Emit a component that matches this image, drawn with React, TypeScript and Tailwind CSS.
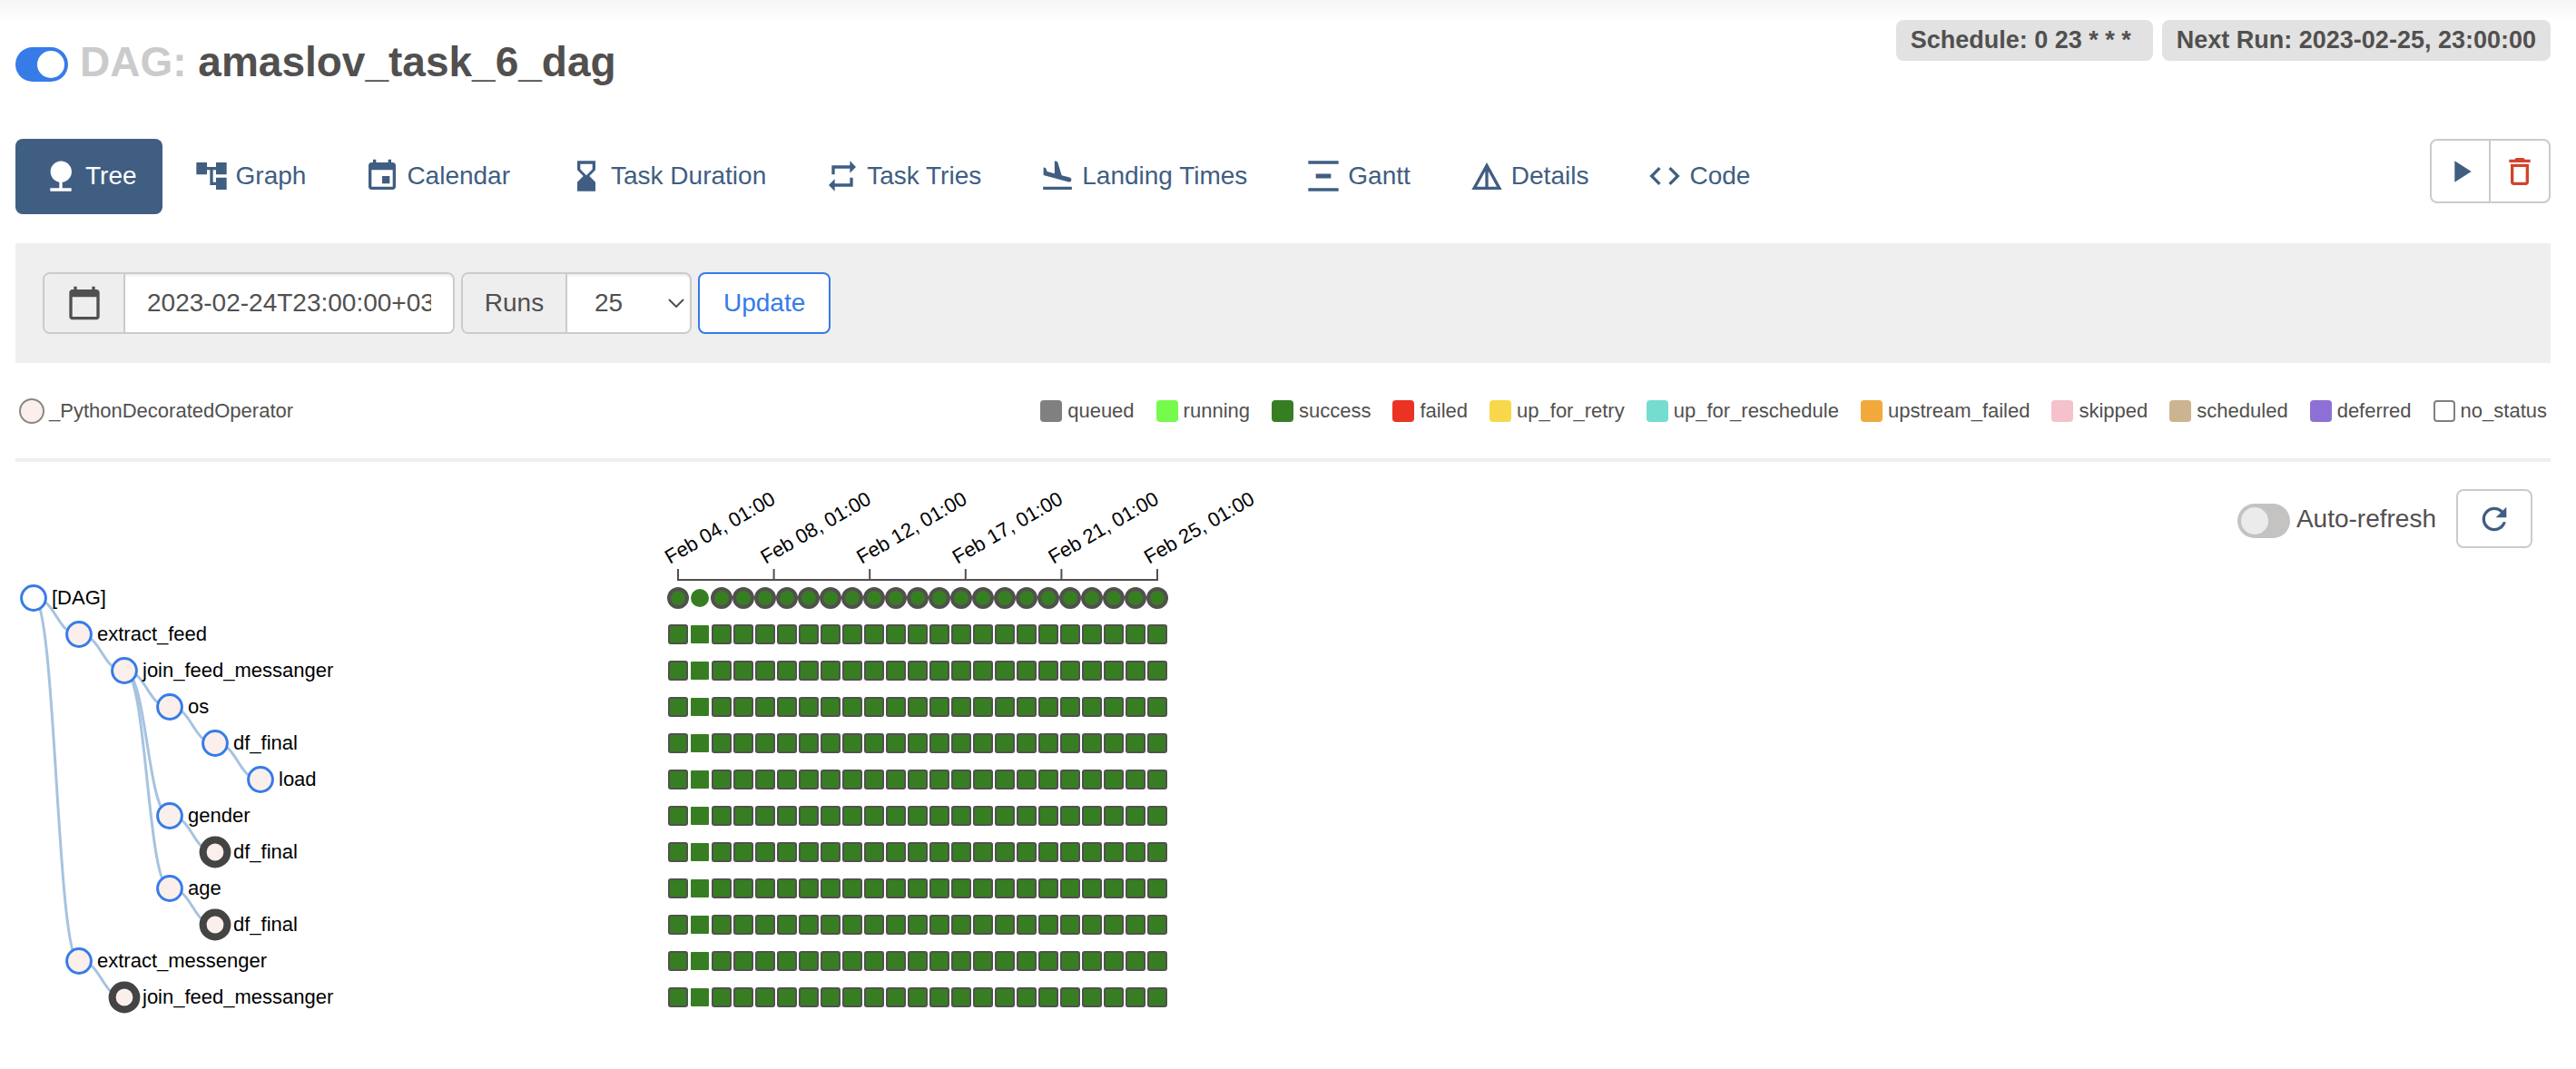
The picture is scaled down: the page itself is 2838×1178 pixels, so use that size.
import React, { useState } from 'react';

const ICONS = {
  tree: 'M13 16.12c3.47-.41 6.17-3.36 6.17-6.95 0-3.87-3.13-7-7-7s-7 3.13-7 7c0 3.47 2.52 6.34 5.83 6.89V20H5v2h14v-2h-6v-3.88z',
  graph: 'M22 11V3h-7v3H9V3H2v8h7V8h2v10h4v3h7v-8h-7v3h-2V8h2v3z',
  event: 'M17 12h-5v5h5v-5zM16 1v2H8V1H6v2H5c-1.11 0-1.99.9-1.99 2L3 19c0 1.1.89 2 2 2h14c1.1 0 2-.9 2-2V5c0-1.1-.9-2-2-2h-1V1h-2zm3 18H5V8h14v11z',
  hourglass: 'M18 22l-.01-6L14 12l3.99-4.01L18 2H6v6l4 4-4 3.99V22h12zM8 7.5V4h8v3.5l-4 4-4-4z',
  repeat: 'M7 7h10v3l4-4-4-4v3H5v6h2V7zm10 10H7v-3l-4 4 4 4v-3h12v-6h-2v4z',
  landing: 'M2.5 19h19v2h-19v-2zm16.84-3.15c.8.21 1.62-.26 1.84-1.06.21-.8-.26-1.62-1.06-1.84l-5.31-1.42-2.76-9.02L10.12 2v8.28L5.15 8.95l-.93-2.32-1.45-.39v5.17l16.57 4.44z',
  gantt: 'M22 2v2H2V2h20zM7 10.5v3h10v-3H7zM2 20v2h20v-2H2z',
  details: 'M12 3L2 21h20L12 3zm1 5.92L18.6 19H13V8.92zm-2 0V19H5.4L11 8.92z',
  code: 'M9.4 16.6L4.8 12l4.6-4.6L8 6l-6 6 6 6 1.4-1.4zm5.2 0l4.6-4.6-4.6-4.6L16 6l6 6-6 6-1.4-1.4z',
  play: 'M8 5v14l11-7z',
  trash: 'M6 19c0 1.1.9 2 2 2h8c1.1 0 2-.9 2-2V7H6v12zM8 9h8v10H8V9zm7.5-5l-1-1h-5l-1 1H5v2h14V4h-3.5z',
  calendar: 'M20 3h-1V1h-2v2H7V1H5v2H4c-1.1 0-2 .9-2 2v16c0 1.1.9 2 2 2h16c1.1 0 2-.9 2-2V5c0-1.1-.9-2-2-2zm0 18H4V8h16v13z',
  refresh: 'M17.65 6.35C16.2 4.9 14.21 4 12 4c-4.42 0-7.99 3.58-7.99 8s3.57 8 7.99 8c3.73 0 6.84-2.55 7.73-6h-2.08c-.82 2.33-3.04 4-5.65 4-3.31 0-6-2.69-6-6s2.69-6 6-6c1.66 0 3.14.69 4.22 1.78L13 11h7V4l-2.35 2.35z',
};

type IconName = keyof typeof ICONS;

function Icon({ name }: { name: IconName }) {
  return (
    <svg viewBox="0 0 24 24" className="size-10 shrink-0 fill-current" aria-hidden="true">
      <path d={ICONS[name]} />
    </svg>
  );
}

const TABS: { label: string; icon: IconName }[] = [
  { label: 'Tree', icon: 'tree' },
  { label: 'Graph', icon: 'graph' },
  { label: 'Calendar', icon: 'event' },
  { label: 'Task Duration', icon: 'hourglass' },
  { label: 'Task Tries', icon: 'repeat' },
  { label: 'Landing Times', icon: 'landing' },
  { label: 'Gantt', icon: 'gantt' },
  { label: 'Details', icon: 'details' },
  { label: 'Code', icon: 'code' },
];

const STATES = [
  { label: 'queued', swatch: 'bg-[#808080]' },
  { label: 'running', swatch: 'bg-[#76fb4c]' },
  { label: 'success', swatch: 'bg-[#377e22]' },
  { label: 'failed', swatch: 'bg-[#ea3323]' },
  { label: 'up_for_retry', swatch: 'bg-[#f8d84a]' },
  { label: 'up_for_reschedule', swatch: 'bg-[#75ddd0]' },
  { label: 'upstream_failed', swatch: 'bg-[#f1a93b]' },
  { label: 'skipped', swatch: 'bg-[#f5c1ca]' },
  { label: 'scheduled', swatch: 'bg-[#cdb490]' },
  { label: 'deferred', swatch: 'bg-[#8d70d6]' },
  { label: 'no_status', swatch: 'border-2 border-[#808080] bg-white' },
];

type TreeNode = { label: string; depth: number; parent: number; repeated?: boolean };

const NODES: TreeNode[] = [
  { label: '[DAG]', depth: 0, parent: -1 },
  { label: 'extract_feed', depth: 1, parent: 0 },
  { label: 'join_feed_messanger', depth: 2, parent: 1 },
  { label: 'os', depth: 3, parent: 2 },
  { label: 'df_final', depth: 4, parent: 3 },
  { label: 'load', depth: 5, parent: 4 },
  { label: 'gender', depth: 3, parent: 2 },
  { label: 'df_final', depth: 4, parent: 6, repeated: true },
  { label: 'age', depth: 3, parent: 2 },
  { label: 'df_final', depth: 4, parent: 8, repeated: true },
  { label: 'extract_messenger', depth: 1, parent: 0 },
  { label: 'join_feed_messanger', depth: 2, parent: 10, repeated: true },
];

const DATES = ['Feb 04, 01:00', 'Feb 08, 01:00', 'Feb 12, 01:00', 'Feb 17, 01:00', 'Feb 21, 01:00', 'Feb 25, 01:00'];
const RUNS = Array.from({ length: 23 }, (_, i) => i);

const nodeX = (depth: number) => 20 + depth * 50;
const rowY = (row: number) => 150 + row * 40;
const runX = (run: number) => 730 + run * 24;

function TreeChart() {
  return (
    <svg width={1400} height={620} className="shrink-0 overflow-visible text-[22px]" role="img" aria-label="Task tree">
      <g className="fill-none stroke-[#a6c3e0]" strokeWidth={3}>
        {NODES.map((node, row) => {
          if (node.parent < 0) return null;
          const sx = nodeX(NODES[node.parent].depth);
          const sy = rowY(node.parent);
          const tx = nodeX(node.depth);
          const ty = rowY(row);
          const mx = (sx + tx) / 2;
          return <path key={row} d={`M${sx} ${sy}C${mx} ${sy} ${mx} ${ty} ${tx} ${ty}`} />;
        })}
      </g>

      {NODES.map((node, row) => (
        <g key={row}>
          <circle
            cx={nodeX(node.depth)}
            cy={rowY(row)}
            r={13.4}
            fill={row === 0 ? '#ffffff' : '#fbefeb'}
            stroke={node.repeated ? '#444444' : '#377be8'}
            strokeWidth={node.repeated ? 8 : 3}
          />
          <text x={nodeX(node.depth) + 20} y={rowY(row) + 7} className="fill-black">
            {node.label}
          </text>
          {RUNS.map((run) =>
            row === 0 ? (
              <circle
                key={run}
                cx={runX(run)}
                cy={rowY(row)}
                r={10}
                className="fill-[#377e22]"
                stroke={run === 1 ? 'none' : '#51504f'}
                strokeWidth={4}
              />
            ) : (
              <rect
                key={run}
                x={runX(run) - 10}
                y={rowY(row) - 10}
                width={20}
                height={20}
                rx={run === 1 ? 1 : 2}
                className="fill-[#377e22]"
                stroke={run === 1 ? 'none' : '#51504f'}
                strokeWidth={2}
              />
            ),
          )}
        </g>
      ))}

      <path
        className="fill-none stroke-[#51504f]"
        strokeWidth={2}
        d={`M730 118V130H1258V118${DATES.slice(1, 5).map((_, i) => `M${730 + (i + 1) * 105.6} 118V130`).join('')}`}
      />
      {DATES.map((date, i) => (
        <text key={date} className="fill-black" transform={`translate(${721 + i * 105.6} 113) rotate(-30)`}>
          {date}
        </text>
      ))}
    </svg>
  );
}

function Toggle({ id, label, checked, onChange }: { id: string; label: string; checked: boolean; onChange: (v: boolean) => void }) {
  return (
    <span className="relative inline-flex h-[38px] w-[58px] shrink-0">
      <input
        id={id}
        type="checkbox"
        role="switch"
        aria-label={label}
        checked={checked}
        onChange={(e) => onChange(e.target.checked)}
        className="peer h-full w-full cursor-pointer appearance-none rounded-full bg-[#c4c3c2] checked:bg-[#377be8]"
      />
      <span className="pointer-events-none absolute top-1 left-1 size-[30px] rounded-full bg-[#ebebeb] peer-checked:right-1 peer-checked:left-auto peer-checked:bg-white" />
    </span>
  );
}

export default function App() {
  const [active, setActive] = useState(true);
  const [autoRefresh, setAutoRefresh] = useState(false);
  const [baseDate, setBaseDate] = useState('2023-02-24T23:00:00+03:00');
  const [runs, setRuns] = useState('25');

  return (
    <div className="bg-white font-['Liberation_Sans',Arial,sans-serif] text-[28px] leading-10 text-[#51504f]">
      <div className="bg-linear-to-b from-[#f5f5f5] to-white to-[24px] pr-7 pl-[17px]">
        <header className="flex h-[153px] items-start justify-between pt-[22px]">
          <div className="flex items-center gap-[13px] pt-4">
            <span className="flex pt-1.5">
              <Toggle id="dag-active" label="Pause or unpause DAG" checked={active} onChange={setActive} />
            </span>
            <h1 className="text-[46px] leading-[60px] font-bold">
              <span className="text-[#cbcbcb]">DAG:</span> amaslov_task_6_dag
            </h1>
          </div>
          <div className="flex gap-[10px] text-[27px] leading-[45px] font-bold">
            <span className="rounded-lg bg-[#e2e2e2] pr-6 pl-4">Schedule: 0 23 * * *</span>
            <span className="rounded-lg bg-[#e2e2e2] px-4">Next Run: 2023-02-25, 23:00:00</span>
          </div>
        </header>

        <div className="flex items-start justify-between">
          <nav className="flex gap-1">
            {TABS.map((tab) => (
              <a
                key={tab.label}
                href={`#${tab.label.toLowerCase().replace(' ', '-')}`}
                className={
                  tab.label === 'Tree'
                    ? 'flex h-[83px] items-center gap-[7px] rounded-lg bg-[#405e82] pr-7 pb-0.5 pl-[30px] text-white'
                    : 'flex h-[83px] items-center gap-[7px] rounded-lg px-[30px] pb-0.5 text-[#405e82]'
                }
              >
                <Icon name={tab.icon} />
                {tab.label}
              </a>
            ))}
          </nav>
          <div className="flex h-[71px] divide-x-2 divide-[#cbcbcb] rounded-lg border-2 border-[#cbcbcb] bg-white">
            <button type="button" aria-label="Trigger DAG" className="flex w-[65px] items-center justify-center text-[#405e82]">
              <Icon name="play" />
            </button>
            <button type="button" aria-label="Delete DAG" className="flex w-16 items-center justify-center text-[#d1442c]">
              <Icon name="trash" />
            </button>
          </div>
        </div>

        <form className="mt-8 flex gap-[7px] bg-[#efefef] px-[30px] py-8" onSubmit={(e) => e.preventDefault()}>
          <div className="flex h-[68px] rounded-lg border-2 border-[#cbcbcb]">
            <label htmlFor="base-date" aria-label="Base date" className="flex w-[89px] items-center justify-center rounded-l-md border-r-2 border-[#cbcbcb] bg-[#eeeeee]">
              <Icon name="calendar" />
            </label>
            <span className="flex w-[361px] rounded-r-md bg-white px-6 shadow-[inset_0_2px_2px_rgba(0,0,0,0.07)]">
              <input
                id="base-date"
                type="text"
                value={baseDate}
                onChange={(e) => setBaseDate(e.target.value)}
                className="w-full min-w-0 bg-transparent outline-none"
              />
            </span>
          </div>
          <div className="flex h-[68px] rounded-lg border-2 border-[#cbcbcb]">
            <label htmlFor="runs" className="flex w-[115px] items-center justify-center rounded-l-md border-r-2 border-[#cbcbcb] bg-[#eeeeee]">
              Runs
            </label>
            <span className="relative flex w-[135px] rounded-r-md bg-white shadow-[inset_0_2px_2px_rgba(0,0,0,0.07)]">
              <select
                id="runs"
                value={runs}
                onChange={(e) => setRuns(e.target.value)}
                className="w-full appearance-none bg-transparent pl-[30px] outline-none"
              >
                <option>5</option>
                <option>25</option>
                <option>50</option>
                <option>100</option>
                <option>365</option>
              </select>
              <svg viewBox="0 0 18 10" className="pointer-events-none absolute top-[27px] right-[6px] h-[10px] w-[18px] fill-none stroke-[#51504f] stroke-2" aria-hidden="true">
                <path d="M1 1l8 8 8-8" />
              </svg>
            </span>
          </div>
          <button type="submit" className="h-[68px] rounded-lg border-2 border-[#377be8] bg-white px-[26px] text-[#377be8]">
            Update
          </button>
        </form>

        <div className="flex h-[105px] items-center justify-between pr-1 pl-1 text-[22px] leading-7">
          <div className="flex items-center gap-[5px]">
            <span className="size-7 rounded-full border-2 border-[#888888] bg-[#fbefeb]" />
            _PythonDecoratedOperator
          </div>
          <ul className="flex gap-6">
            {STATES.map((state) => (
              <li key={state.label} className="flex items-center gap-[6px]">
                <span className={`size-6 rounded ${state.swatch}`} />
                {state.label}
              </li>
            ))}
          </ul>
        </div>

        <hr className="border-0 border-t-4 border-[#efefef]" />

        <main className="flex items-start justify-between">
          <TreeChart />
          <div className="flex items-center pt-[30px] pr-5">
            <span className="flex pt-1">
              <Toggle id="auto-refresh" label="Auto-refresh" checked={autoRefresh} onChange={setAutoRefresh} />
            </span>
            <label htmlFor="auto-refresh" className="pr-[22px] pl-[7px]">
              Auto-refresh
            </label>
            <button type="button" aria-label="Refresh" className="flex h-[65px] w-[84px] items-center justify-center rounded-lg border-2 border-[#cbcbcb] bg-white text-[#405e82]">
              <Icon name="refresh" />
            </button>
          </div>
        </main>
      </div>
    </div>
  );
}
